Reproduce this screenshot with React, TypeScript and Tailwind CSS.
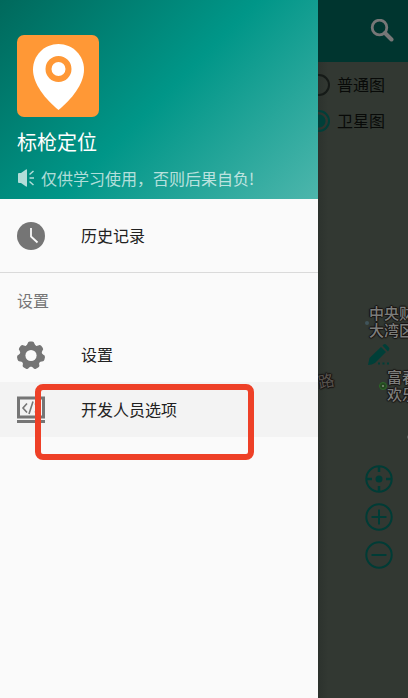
import type { ReactNode } from "react";

function AppLogo() {
  return (
    <svg viewBox="0 0 82 82" className="size-[82px] rounded-[7px] bg-[#ff9836]" aria-hidden="true">
      <path
        fill="#fff"
        d="M41.500 9C27.400 9 16 20.400 16 34.500C16 49 28.500 64.500 41.500 75C54.500 64.500 67 49 67 34.500C67 20.400 55.600 9 41.500 9Z"
      />
      <circle cx="41.500" cy="34" r="10" fill="none" stroke="#ff9836" strokeWidth="6" />
    </svg>
  );
}

function SpeakerIcon() {
  return (
    <svg viewBox="0 0 18 18" className="size-[18px]" aria-hidden="true">
      <path fill="currentColor" d="M1 5q0-1 1-1h2l5-3.500q1-.5 1 .5v16q0 1-1 .5L4 14H2q-1 0-1-1Z" />
      <path stroke="currentColor" strokeWidth="1.500" fill="none" d="M12.500 5.500l4-3.500M12.500 9h4.500M12.500 12.500l4 3.500" />
    </svg>
  );
}

function ClockIcon() {
  return (
    <svg viewBox="0 0 28 28" className="size-7" aria-hidden="true">
      <circle cx="14" cy="14" r="14" fill="#757575" />
      <path d="M14 6v8.500l6.500 6" fill="none" stroke="#fafafa" strokeWidth="1.800" />
    </svg>
  );
}

function GearIcon() {
  return (
    <svg viewBox="0 0 28 28" className="size-7" aria-hidden="true">
      <g fill="#757575">
        <circle cx="14" cy="14.500" r="10.800" />
        {[0, 51.43, 102.86, 154.29, 205.71, 257.14, 308.57].map((angle) => (
          <path
            key={angle}
            d="M7.500 6Q10.200 4.800 10.600 2.600Q11 .5 12.800 .5H15.200Q17 .5 17.400 2.600Q17.800 4.800 20.500 6L14 11Z"
            transform={`rotate(${angle} 14 14.500)`}
          />
        ))}
      </g>
      <circle cx="14" cy="14.500" r="5.600" fill="#fafafa" />
    </svg>
  );
}

function DeveloperIcon() {
  return (
    <svg viewBox="0 0 28 28" className="size-7" aria-hidden="true">
      <g fill="none" stroke="#757575">
        <path strokeWidth="3" d="M1.500 2h25v19h-25Z" />
        <path strokeWidth="1.600" d="M10 7.500L6 12l4 4.500M18 7.500l4 4.500-4 4.500M16 5.500L12 18" />
        <path strokeWidth="3" d="M0 25.500h28" />
      </g>
    </svg>
  );
}

function SearchIcon() {
  return (
    <svg viewBox="0 0 24 24" className="size-6" aria-hidden="true">
      <circle cx="9.500" cy="8.500" r="7.300" fill="none" stroke="#777" strokeWidth="2.800" />
      <path d="M15 14l6.500 6.500" stroke="#777" strokeWidth="4" strokeLinecap="round" />
    </svg>
  );
}

function PencilIcon() {
  return (
    <svg viewBox="0 0 24 24" className="size-6" fill="#003f38" aria-hidden="true">
      <path d="M1 22l1.500-7L14 4l5 5L8 20Q5 22 1 22Z" />
      <path d="M15.500 2.500l1-1q1.500-1 3 .5l2 2q1.500 1.500 .5 3l-1 1.500Z" />
      <path d="M11 19.500h2v2h-2ZM15.500 19.500h2v2h-2ZM20 19.500h2v2h-2Z" />
    </svg>
  );
}

function ControlIcon({ children }: { children: ReactNode }) {
  return (
    <svg viewBox="0 0 28 28" className="size-7" fill="none" stroke="#003c36" strokeWidth="2" aria-hidden="true">
      <circle cx="14" cy="14" r="12.700" />
      {children}
    </svg>
  );
}

function DrawerItem({ icon, label, active = false }: { icon: ReactNode; label: string; active?: boolean }) {
  return (
    <button
      type="button"
      className={`flex h-[55px] w-full items-center gap-9 px-[17px] text-left text-base text-[#212121] ${
        active ? "bg-[#f3f3f3]" : ""
      }`}
    >
      {icon}
      <span className="pb-0.5">{label}</span>
    </button>
  );
}

function LayerOption({ label, checked = false }: { label: string; checked?: boolean }) {
  return (
    <label className="flex h-9 items-center gap-[7px] whitespace-nowrap text-base text-[#080a08]">
      <input
        type="radio"
        name="layer"
        defaultChecked={checked}
        className="size-[22px] shrink-0 appearance-none rounded-full border-2 border-[#151a17] checked:border-[#003f39] checked:bg-[radial-gradient(circle,#003f39_6px,transparent_7px)]"
      />
      <span className="pb-0.5">{label}</span>
    </label>
  );
}

const placeText =
  "absolute whitespace-nowrap text-[15px] leading-[17px] font-medium text-[#7c7d7b] [text-shadow:1px_0_1px_#171211,-1px_0_1px_#171211,0_1px_1px_#171211,0_-1px_1px_#171211]";

export default function App() {
  return (
    <div className="relative flex min-h-screen overflow-hidden bg-[#323832] font-['Noto_Sans_CJK_SC',sans-serif]">
      <aside className="w-[318px] shrink-0 bg-[#fafafa]">
        <header className="flex h-[199px] flex-col bg-linear-[135deg,#00695c,#009688_50%,#4db6ac] px-[17px] pt-[35px] text-white">
          <AppLogo />
          <h1 className="mt-[9px] text-xl leading-8">标枪定位</h1>
          <p className="mt-2 flex items-center gap-1.5 text-base leading-6 text-white/70">
            <SpeakerIcon />
            <span>仅供学习使用，否则后果自负!</span>
          </p>
        </header>
        <nav>
          <div className="border-b border-[#dadada] py-[9px]">
            <DrawerItem icon={<ClockIcon />} label="历史记录" />
          </div>
          <h2 className="flex h-[54px] items-center px-[17px] pb-px text-base text-[#757575]">设置</h2>
          <DrawerItem icon={<GearIcon />} label="设置" />
          <DrawerItem icon={<DeveloperIcon />} label="开发人员选项" active />
        </nav>
      </aside>

      <main className="relative min-w-0 flex-1 overflow-hidden bg-linear-[90deg,#2c322d,#323832_10px]">
        <div className="flex h-[62px] items-center justify-end bg-[#00352f] pr-3.5">
          <button type="button" aria-label="搜索">
            <SearchIcon />
          </button>
        </div>
        <fieldset className="-ml-2.5 pt-[5px]">
          <LayerOption label="普通图" />
          <LayerOption label="卫星图" checked />
        </fieldset>

        <span className={`${placeText} top-[304px] left-[51px]`}>
          中央财
          <br />
          大湾区
        </span>
        <span className="absolute top-[321px] left-[47px] size-1 rounded-full bg-[#40545b]" />
        <span className={`${placeText} top-[368px] left-[69px]`}>
          富春
          <br />
          欢乐
        </span>
        <span className="absolute top-[382px] left-[61px] flex size-2 items-center justify-center rounded-full border border-[#2b6928] bg-[#24451f]">
          <span className="size-0.5 rounded-full bg-[#83927f]" />
        </span>
        <span className="absolute top-[372px] left-0 -rotate-12 text-base leading-[17px] text-[#57534e] [text-shadow:1px_0_1px_#171211,-1px_0_1px_#171211,0_1px_1px_#171211,0_-1px_1px_#171211]">
          路
        </span>
        <span className="absolute top-[435px] left-[89px] size-1 rounded-full bg-[#59615f]" />

        <button type="button" aria-label="编辑" className="absolute top-[343px] right-[17px]">
          <PencilIcon />
        </button>
        <div className="absolute top-[465px] right-[15px] flex flex-col gap-[10px]">
          <button type="button" aria-label="定位">
            <ControlIcon>
              <circle cx="14" cy="14" r="3.500" fill="#003c36" stroke="none" />
              <path strokeWidth="2.500" d="M14 1v6M14 21v6M1 14h6M21 14h6" />
            </ControlIcon>
          </button>
          <button type="button" aria-label="放大">
            <ControlIcon>
              <path d="M14 6.500v15M6.500 14h15" />
            </ControlIcon>
          </button>
          <button type="button" aria-label="缩小">
            <ControlIcon>
              <path d="M6.500 14h15" />
            </ControlIcon>
          </button>
        </div>
      </main>

      <div className="pointer-events-none absolute top-[384px] left-[35px] h-[76px] w-[219px] rounded-lg border-6 border-[#ee4027]" />
    </div>
  );
}
